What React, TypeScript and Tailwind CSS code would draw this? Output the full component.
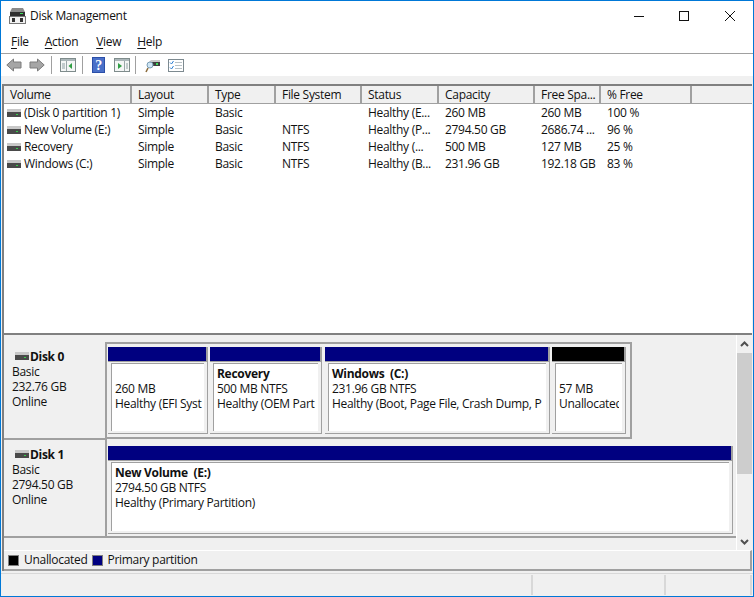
import type { ReactNode } from "react";

const COLUMNS = [
  { label: "Volume", width: "w-[128px]" },
  { label: "Layout", width: "w-[77px]" },
  { label: "Type", width: "w-[67px]" },
  { label: "File System", width: "w-[86px]" },
  { label: "Status", width: "w-[77px]" },
  { label: "Capacity", width: "w-[96px]" },
  { label: "Free Spa...", width: "w-[66px]" },
  { label: "% Free", width: "w-[91px]" },
];

const ROWS = [
  ["(Disk 0 partition 1)", "Simple", "Basic", "", "Healthy (E...", "260 MB", "260 MB", "100 %"],
  ["New Volume (E:)", "Simple", "Basic", "NTFS", "Healthy (P...", "2794.50 GB", "2686.74 ...", "96 %"],
  ["Recovery", "Simple", "Basic", "NTFS", "Healthy (...", "500 MB", "127 MB", "25 %"],
  ["Windows (C:)", "Simple", "Basic", "NTFS", "Healthy (B...", "231.96 GB", "192.18 GB", "83 %"],
];

function DriveIcon() {
  return (
    <svg width="14" height="8" viewBox="0 0 14 8" className="shrink-0">
      <rect x="0" y="0" width="14" height="3" fill="#c8c8c8" />
      <rect x="0" y="3" width="14" height="5" fill="#4a4a4a" />
      <rect x="9" y="5" width="2" height="1" fill="#35d04a" />
    </svg>
  );
}

function AppIcon() {
  return (
    <svg width="17" height="16" viewBox="0 0 17 16">
      <path d="M3 0h11l2 4H1z" fill="#8a8a8a" />
      <rect x="1" y="4" width="15" height="4" fill="#2f2f2f" />
      <rect x="11" y="5" width="3" height="1" fill="#3ddc5a" />
      <rect x="0.500" y="8.500" width="16" height="7" fill="#f2f2f2" stroke="#777" />
      <rect x="3" y="10" width="3" height="4" fill="#333" />
      <rect x="11" y="10" width="3" height="4" fill="#333" />
    </svg>
  );
}

function ArrowIcon({ flip = false }: { flip?: boolean }) {
  return (
    <svg width="16" height="14" viewBox="0 0 16 14" className={flip ? "-scale-x-100" : ""}>
      <path d="M7.500 1 .8 7l6.700 6V10h7.500V4H7.500z" fill="#a6a6a6" stroke="#7c7c7c" />
    </svg>
  );
}

function PaneIcon({ arrow }: { arrow: "left" | "right" }) {
  return (
    <svg width="16" height="14" viewBox="0 0 16 14">
      <rect x="0.500" y="0.500" width="15" height="13" fill="#f4f6f6" stroke="#7f8c8c" />
      <rect x="1" y="1" width="14" height="2" fill="#aab6b9" />
      {arrow === "left" ? (
        <>
          <path d="M2 6h3M2 8h3M2 10h3" stroke="#8fa0a4" />
          <rect x="6" y="3" width="1" height="10" fill="#9aa6a9" />
          <path d="M12 5v6L8.500 8z" fill="#2f9e44" />
        </>
      ) : (
        <>
          <path d="M4 5v6l4-3z" fill="#2f9e44" />
          <rect x="10" y="3" width="1" height="10" fill="#9aa6a9" />
          <path d="M12 6h2M12 8h2M12 10h2" stroke="#8fa0a4" />
        </>
      )}
    </svg>
  );
}

function HelpIcon() {
  return (
    <svg width="13" height="16" viewBox="0 0 13 16">
      <rect width="13" height="16" fill="#2b4fa8" />
      <rect x="1" y="1" width="11" height="14" fill="#4a70c8" />
      <text x="6.500" y="13" textAnchor="middle" fontSize="14" fontWeight="700" fill="#fff" fontFamily="Liberation Serif, serif">?</text>
    </svg>
  );
}

function RescanIcon() {
  return (
    <svg width="15" height="15" viewBox="0 0 15 15">
      <path d="M4 4 6 2h9v2z" fill="#c9c9c9" />
      <rect x="5" y="4" width="10" height="4" fill="#3f3f3f" />
      <rect x="11" y="5" width="2" height="2" fill="#3ddc5a" />
      <circle cx="5" cy="7" r="3" fill="#cfe6f5" stroke="#7b9db5" />
      <path d="M3 10 1 14" stroke="#8a6a3a" strokeWidth="1.500" />
    </svg>
  );
}

function ChecklistIcon() {
  return (
    <svg width="16" height="13" viewBox="0 0 16 13">
      <rect x="0.500" y="0.500" width="15" height="12" fill="#fff" stroke="#7d8a90" />
      <path d="M2 3.500 3.500 5 5.500 2M2 8.500 3.500 10 5.500 7" fill="none" stroke="#2d7fd3" />
      <path d="M7 3.500h7M7 6.500h7M7 9.500h7" stroke="#b9c2c6" />
    </svg>
  );
}

function ToolbarSep() {
  return <div className="h-[18px] w-px bg-[#a0a0a0]" />;
}

function Mnemonic({ first, rest, className = "" }: { first: string; rest: string; className?: string }) {
  return (
    <span className={className}>
      <span className="underline underline-offset-2">{first}</span>
      {rest}
    </span>
  );
}

function Partition({ width, color = "bg-[#000080]", children }: { width: string; color?: string; children: ReactNode }) {
  return (
    <div className={`${width} flex flex-col shrink-0`}>
      <div className={`h-[14px] shrink-0 ${color} border-r-2 border-[#a0a0a0]`} />
      <div className="flex-1 min-h-0 border-t border-r border-b border-[#a0a0a0] pt-[1px] pl-[3px] pr-[3px] pb-[2px]">
        <div className="h-full bg-white border-l border-t border-[#a0a0a0] pl-[3px] pt-[2px] overflow-hidden whitespace-nowrap leading-[15px] text-[#111]">
          {children}
        </div>
      </div>
    </div>
  );
}

function DiskLabel({ name, size }: { name: string; size: string }) {
  return (
    <div className="w-[103px] shrink-0 border-r-2 border-b-2 border-[#a0a0a0] pl-[8px] pt-[6px] leading-[15px] text-[#111]">
      <div className="flex items-center gap-[1px] h-[16px] pl-[3px] font-bold">
        <DriveIcon />
        <span>{name}</span>
      </div>
      <div>Basic</div>
      <div>{size}</div>
      <div>Online</div>
    </div>
  );
}

export default function App() {
  return (
    <div className="w-[754px] h-[597px] flex flex-col border border-[#0078d7] bg-[#f0f0f0] overflow-hidden text-[12px] tracking-[-0.3px] text-[#111] font-['Open_Sans','Noto_Sans',sans-serif]">
      {/* title bar */}
      <div className="h-[29px] shrink-0 bg-white flex items-center pl-[8px]">
        <AppIcon />
        <span className="ml-[4px]">Disk Management</span>
        <div className="ml-auto flex items-center">
          <svg width="10" height="10" viewBox="0 0 10 10" className="mr-[35px]"><path d="M0 5.500h10" stroke="#111" /></svg>
          <svg width="10" height="10" viewBox="0 0 10 10" className="mr-[36px]"><rect x="0.500" y="0.500" width="9" height="9" fill="none" stroke="#111" /></svg>
          <svg width="10" height="10" viewBox="0 0 10 10" className="mr-[18px]"><path d="M0 0l10 10M10 0 0 10" stroke="#111" /></svg>
        </div>
      </div>
      {/* menu */}
      <div className="h-[23px] shrink-0 bg-white border-b border-[#a0a0a0] box-content flex items-center pl-[10px] gap-[16px]">
        <Mnemonic first="F" rest="ile" />
        <Mnemonic first="A" rest="ction" className="mr-[2px]" />
        <Mnemonic first="V" rest="iew" />
        <Mnemonic first="H" rest="elp" />
      </div>
      {/* toolbar */}
      <div className="h-[22px] shrink-0 bg-white flex items-center pl-[5px]">
        <ArrowIcon />
        <div className="w-[7px]" />
        <ArrowIcon flip />
        <div className="w-[6px]" />
        <ToolbarSep />
        <div className="w-[8px]" />
        <PaneIcon arrow="left" />
        <div className="w-[6px]" />
        <ToolbarSep />
        <div className="w-[9px]" />
        <HelpIcon />
        <div className="w-[9px]" />
        <PaneIcon arrow="right" />
        <div className="w-[5px]" />
        <ToolbarSep />
        <div className="w-[9px]" />
        <RescanIcon />
        <div className="w-[8px]" />
        <ChecklistIcon />
      </div>
      <div className="h-[8px] shrink-0 bg-[#f0f0f0]" />
      {/* volume list */}
      <div className="h-[251px] shrink-0 ml-px mr-[1px] border-l-2 border-t-2 border-b-2 border-[#808080] bg-white flex flex-col">
        <div className="h-[18px] shrink-0 flex bg-[#f0f0f0] border-b border-[#a0a0a0] leading-[17px]">
          {COLUMNS.map((c) => (
            <div key={c.label} className={`${c.width} shrink-0 border-r-2 border-[#a0a0a0] pl-[6px] whitespace-nowrap`}>
              {c.label}
            </div>
          ))}
        </div>
        <div>
          {ROWS.map((row) => (
            <div key={row[0]} className="h-[17px] flex leading-[17px]">
              {row.map((cell, i) => (
                <div key={i} className={`${COLUMNS[i].width} shrink-0 whitespace-nowrap ${i === 0 ? "flex items-center gap-[3px] pl-[3px]" : "pl-[6px]"}`}>
                  {i === 0 && <DriveIcon />}
                  {cell}
                </div>
              ))}
            </div>
          ))}
        </div>
      </div>
      {/* graphical view */}
      <div className="flex-1 min-h-0 flex flex-col ml-px mr-[1px] border-l-2 border-[#808080]">
        <div className="h-[215px] shrink-0 flex pt-[7px]">
          <div className="flex-1 min-w-0 flex flex-col">
            <div className="h-[98px] flex">
              <DiskLabel name="Disk 0" size="232.76 GB" />
              <div className="h-[97px] w-[525px] flex pl-[1px] pr-[3px] pt-[3px] pb-[3px] border-r-2 border-b-2 border-t-2 border-[#a0a0a0]">
                <Partition width="w-[102px] pr-[2px]">
                  <div className="pt-[15px]">260 MB</div>
                  <div>Healthy (EFI Syst</div>
                </Partition>
                <Partition width="w-[115px] pr-[3px]">
                  <div className="font-bold">Recovery</div>
                  <div>500 MB NTFS</div>
                  <div>Healthy (OEM Part</div>
                </Partition>
                <Partition width="w-[227px] pr-[2px]">
                  <div className="font-bold">Windows&nbsp; (C:)</div>
                  <div>231.96 GB NTFS</div>
                  <div>Healthy (Boot, Page File, Crash Dump, P</div>
                </Partition>
                <Partition width="w-[74px]" color="bg-black">
                  <div className="pt-[15px]">57 MB</div>
                  <div className="w-[60px] overflow-hidden">Unallocated</div>
                </Partition>
              </div>
            </div>
            <div className="h-[98px] flex">
              <DiskLabel name="Disk 1" size="2794.50 GB" />
              <div className="flex-1 flex pl-[1px] pt-[6px] pb-[2px] pr-[3px] border-b-2 border-[#a0a0a0]">
                <Partition width="w-full">
                  <div className="font-bold">New Volume&nbsp; (E:)</div>
                  <div>2794.50 GB NTFS</div>
                  <div>Healthy (Primary Partition)</div>
                </Partition>
              </div>
            </div>
          </div>
          {/* scrollbar */}
          <div className="w-[16px] shrink-0 -mt-[7px] flex flex-col bg-[#f0f0f0] border-l border-white">
            <div className="h-[18px] flex items-center justify-center">
              <svg width="9" height="6" viewBox="0 0 9 6"><path d="M1 5l3.500-3.500L8 5" fill="none" stroke="#505050" strokeWidth="2" /></svg>
            </div>
            <div className="h-[121px] bg-[#cdcdcd]" />
            <div className="flex-1" />
            <div className="h-[17px] flex items-center justify-center">
              <svg width="9" height="6" viewBox="0 0 9 6"><path d="M1 1l3.500 3.500L8 1" fill="none" stroke="#505050" strokeWidth="2" /></svg>
            </div>
          </div>
        </div>
        {/* legend */}
        <div className="h-[21px] shrink-0 flex items-center border-t border-white border-r-2 border-b-2 border-r-[#a0a0a0] border-b-[#a0a0a0] pl-[4px]">
          <div className="w-[11px] h-[11px] bg-black border border-[#808080]" />
          <span className="ml-[5px]">Unallocated</span>
          <div className="ml-[4px] w-[11px] h-[11px] bg-[#000080] border border-[#808080]" />
          <span className="ml-[5px]">Primary partition</span>
        </div>
      </div>
      {/* status bar */}
      <div className="h-[23px] shrink-0 mt-[2px] flex border-t border-[#d8d8d8]">
        <div className="w-[532px] border-r-2 border-[#d8d8d8] my-[1px]" />
        <div className="w-[133px] border-r-2 border-[#d8d8d8] my-[1px]" />
        <div className="w-[86px] border-r-2 border-[#d8d8d8] my-[1px]" />
      </div>
    </div>
  );
}
